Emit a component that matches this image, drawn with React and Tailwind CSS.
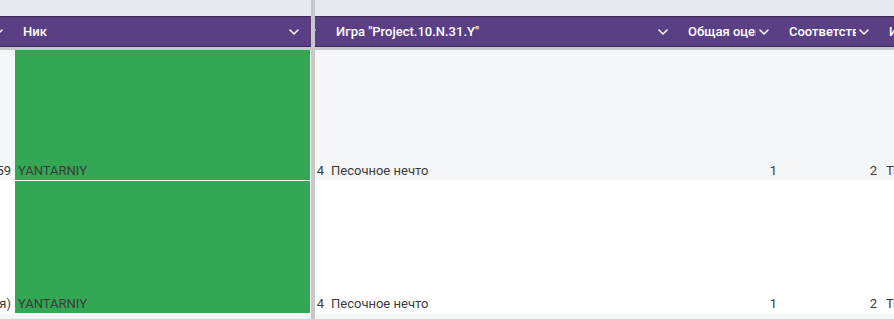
import React from "react";

const Chevron = ({ auto = true }) => (
  <svg width="10" height="6" viewBox="0 0 10 6" className={`shrink-0 ${auto ? "ml-auto" : ""}`}>
    <path d="M1 1 L5 5 L9 1" fill="none" stroke="white" strokeWidth="1.5" strokeLinecap="round" strokeLinejoin="round" />
  </svg>
);

const HeaderCell = ({ w, children }) => {
  if (!children) {
    return (
      <div className="h-full flex items-center justify-end pr-[12px] overflow-hidden shrink-0" style={{ width: w }}>
        <Chevron auto={false} />
      </div>
    );
  }
  return (
    <div
      className="h-full flex items-center gap-[3px] pl-2 pr-[12px] overflow-hidden shrink-0"
      style={{ width: w }}
    >
      <span className="min-w-0 overflow-hidden whitespace-nowrap text-white text-[13px] font-medium leading-[16px]">
        {children}
      </span>
      <Chevron />
    </div>
  );
};

const Cell = ({ w, align = "left", green, pl, children }) => (
  <div
    className={`h-full flex items-end pb-[1px] overflow-hidden shrink-0 whitespace-nowrap text-[13px] leading-[16px] text-[#3a3a3a] ${
      align === "right" ? "justify-end pr-[4px]" : pl === 5 ? "pl-[5px]" : "pl-[3px]"
    } ${green ? "bg-[#33a754] mr-[1px]" : ""}`}
    style={{ width: green ? w - 1 : w }}
  >
    {children}
  </div>
);

function Pane({ className, cols, rows }) {
  return (
    <div className={`flex flex-col h-full overflow-hidden ${className}`}>
      <div className="h-[16px] bg-[#e8e9ee] shrink-0" />
      <div className="h-[31px] shrink-0 flex bg-[#5b3f85] border-y border-[#3b2a5c]">
        {cols.map((c, i) => (
          <HeaderCell key={i} w={c.w}>
            {c.title}
          </HeaderCell>
        ))}
      </div>
      <div className="h-[3px] bg-[#c8c8c8] shrink-0" />
      {rows.map((r, ri) => (
        <div
          key={ri}
          className={`flex shrink-0 border-b border-white ${ri % 2 === 0 ? "bg-[#f5f6f8]" : "bg-white"}`}
          style={{ height: r.h }}
        >
          {cols.map((c, ci) => (
            <Cell key={ci} w={c.w} align={c.align} green={c.green} pl={c.pl}>
              {r.cells[ci]}
            </Cell>
          ))}
        </div>
      ))}
      <div className="flex-1 bg-[#f5f6f8]" />
    </div>
  );
}

export default function App() {
  const leftCols = [
    { w: 15, title: "", align: "right" },
    { w: 296, title: "Ник", green: true },
  ];
  const leftRows = [
    { h: 131, cells: ["3459", "YANTARNIY"] },
    { h: 133, cells: ["(Гостевая)", "YANTARNIY"] },
  ];
  const rightCols = [
    { w: 13, title: "", align: "right" },
    { w: 352, title: 'Игра "Project.10.N.31.Y"' },
    { w: 101, title: "Общая оценка", align: "right" },
    { w: 100, title: "Соответствие", align: "right" },
    { w: 120, title: "Идея", pl: 5 },
  ];
  const rightRows = [
    { h: 131, cells: ["4", "Песочное нечто", "1", "2", "Tsukuru"] },
    { h: 133, cells: ["4", "Песочное нечто", "1", "2", "Tsukuru"] },
  ];
  return (
    <div
      className="w-[894px] h-[319px] overflow-hidden flex bg-white"
      style={{ fontFamily: "Roboto, 'Noto Sans', sans-serif" }}
    >
      <Pane className="w-[311px] shrink-0" cols={leftCols} rows={leftRows} />
      <div className="w-[4px] h-full bg-[#c8c8c8] shrink-0" />
      <Pane className="flex-1 min-w-0" cols={rightCols} rows={rightRows} />
    </div>
  );
}
